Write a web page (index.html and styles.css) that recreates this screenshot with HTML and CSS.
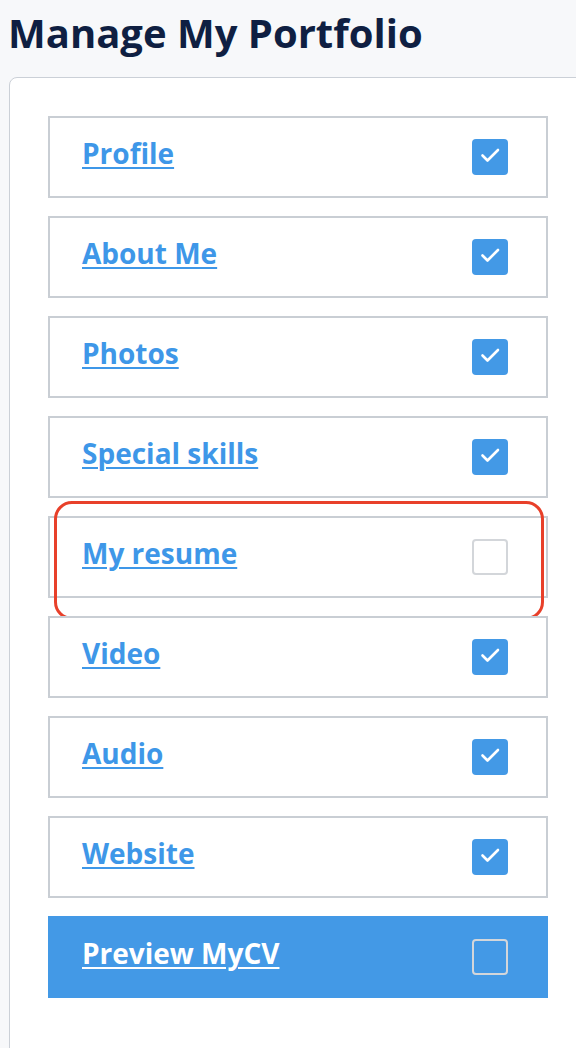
FILE: index.html
```html
<!DOCTYPE html>
<html lang="en">
<head>
    <meta charset="UTF-8">
    <meta name="viewport" content="width=device-width, initial-scale=1.0">
    <title>Manage My Portfolio</title>
    <link rel="stylesheet" href="styles.css">
</head>
<body>

    <h1>Manage My Portfolio</h1>

    <div class="card">
        <div class="sections">
            <div class="row">
                <a href="#">Profile</a>
                <span class="box checked"></span>
            </div>
            <div class="row">
                <a href="#">About Me</a>
                <span class="box checked"></span>
            </div>
            <div class="row">
                <a href="#">Photos</a>
                <span class="box checked"></span>
            </div>
            <div class="row">
                <a href="#">Special skills</a>
                <span class="box checked"></span>
            </div>
            <div class="row highlight">
                <a href="#">My resume</a>
                <span class="box"></span>
            </div>
            <div class="row">
                <a href="#">Video</a>
                <span class="box checked"></span>
            </div>
            <div class="row">
                <a href="#">Audio</a>
                <span class="box checked"></span>
            </div>
            <div class="row">
                <a href="#">Website</a>
                <span class="box checked"></span>
            </div>
            <div class="row preview">
                <a href="#">Preview MyCV</a>
                <span class="box"></span>
            </div>
        </div>
    </div>

</body>
</html>
```

FILE: styles.css
```css
body {
    margin: 0;
    padding: 0 0 0 8px;
    background-color: #f7f8fa;
    font-family: "Open Sans", "Noto Sans", sans-serif;
    overflow: hidden;
}

h1 {
    margin: 7px 0 0;
    font-size: 40px;
    font-weight: 700;
    color: #0f1f42;
    line-height: 52px;
}

.card {
    margin: 18px -40px 0 1px;
    background: #fff;
    border: 1px solid #cbd0d7;
    border-radius: 8px;
    padding: 38px 0 60px 38px;
    min-height: 1000px;
}

.sections {
    width: 500px;
    display: flex;
    flex-direction: column;
    gap: 18px;
}

.row {
    height: 82px;
    box-sizing: border-box;
    border: 2px solid #c9ced4;
    background: #fff;
    display: flex;
    align-items: center;
    justify-content: space-between;
    padding: 0 38px 0 32px;
    position: relative;
}

.row a {
    color: #3e97e8;
    font-size: 28px;
    font-weight: 700;
    text-decoration: underline;
    text-decoration-thickness: 2px;
    text-underline-offset: 3px;
    margin-top: -8px;
}

.box {
    width: 36px;
    height: 36px;
    box-sizing: border-box;
    border: 2px solid #d3d6da;
    border-radius: 4px;
    background: #fff;
}

/* Галочка */
.box.checked {
    border: none;
    background-color: #4399e6;
    background-image: url("data:image/svg+xml,%3Csvg xmlns='http://www.w3.org/2000/svg' viewBox='0 0 36 36'%3E%3Cpath d='M10.5 16.5 L15.5 21.5 L26 11' fill='none' stroke='white' stroke-width='2.6' stroke-linecap='round' stroke-linejoin='round'/%3E%3C/svg%3E");
}

.preview {
    border-color: #4399e6;
    background: #4399e6;
}

.preview a {
    color: #fff;
}

.preview .box {
    background: #4399e6;
    border-color: #d3d6da;
}

/* Красная рамка вокруг пункта */
.highlight::after {
    content: "";
    position: absolute;
    left: 4px;
    right: 2px;
    top: -17px;
    bottom: -24px;
    border: 3px solid #e8402a;
    border-radius: 18px;
    pointer-events: none;
}
```
